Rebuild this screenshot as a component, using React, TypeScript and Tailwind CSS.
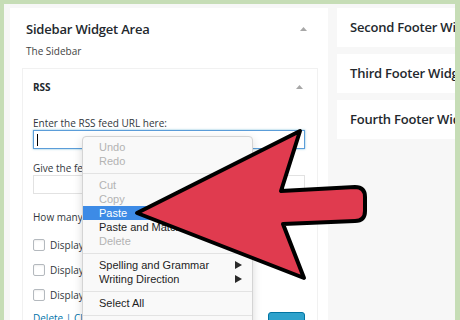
import { ReactNode } from "react";

function UpCaret({ className = "" }: { className?: string }) {
  return (
    <svg width="7" height="4" viewBox="0 0 7 4" className={className}>
      <path d="M0 4 L3.5 0 L7 4 Z" fill="#a7a7a7" />
    </svg>
  );
}

type Item = { label: string; disabled?: boolean; active?: boolean; sub?: boolean };

const groups: Item[][] = [
  [{ label: "Undo", disabled: true }, { label: "Redo", disabled: true }],
  [
    { label: "Cut", disabled: true },
    { label: "Copy", disabled: true },
    { label: "Paste", active: true },
    { label: "Paste and Match Style" },
    { label: "Delete", disabled: true },
  ],
  [{ label: "Spelling and Grammar", sub: true }, { label: "Writing Direction", sub: true }],
  [{ label: "Select All" }],
];

function MenuRow({ item }: { item: Item }) {
  const color = item.active ? "bg-[#3d8be6] text-white" : item.disabled ? "text-[#b3b3b3]" : "text-[#1e1e1e]";
  return (
    <div className={`h-[14px] flex items-center justify-between pl-[16px] pr-[10px] ${color}`}>
      <span>{item.label}</span>
      {item.sub && (
        <svg width="7" height="8" viewBox="0 0 7 8">
          <path d="M0 0 L7 4 L0 8 Z" fill="#2a2a2a" />
        </svg>
      )}
    </div>
  );
}

function ContextMenu() {
  return (
    <div className="absolute left-[82px] top-[136px] w-[171px] h-[200px] bg-[#f9f9f9] border border-[#d4d4d4] rounded-[4px] shadow-[0_3px_10px_rgba(0,0,0,0.15)] pt-[3px] text-[11px] leading-[14px] font-['Liberation_Sans',Arial,sans-serif]">
      {groups.map((g, i) => (
        <div key={i}>
          {g.map(it => <MenuRow key={it.label} item={it} />)}
          <div className="h-[10px] flex items-center">
            <div className="h-px w-full bg-[#e3e3e3]" />
          </div>
        </div>
      ))}
    </div>
  );
}

function Checkbox({ children }: { children: ReactNode }) {
  return (
    <div className="h-[25px] flex items-center gap-[5px]">
      <div className="w-[12px] h-[12px] border border-[#b4b9be] rounded-[2px] bg-white shadow-[inset_0_1px_2px_rgba(0,0,0,0.07)]" />
      <span>{children}</span>
    </div>
  );
}

function FooterPanel({ title }: { title: string }) {
  return (
    <div className="h-[39px] w-[170px] shrink-0 bg-white flex items-center pl-[13px] whitespace-nowrap text-[13px] tracking-[-0.2px] font-semibold text-[#23282d]">
      {title}
    </div>
  );
}

export default function App() {
  return (
    <div className="relative w-[460px] h-[320px] overflow-hidden bg-[#c6ddb6] pt-[4px] pl-[4px] pr-[5px]">
      <div className="h-full bg-[#f7f7f7] flex gap-[9px] pt-[4px] pl-[6px] overflow-hidden font-['Open_Sans',sans-serif] text-[#32373c]">
        {/* sidebar widget area */}
        <div className="w-[318px] shrink-0 h-[330px] bg-white pl-[12px] pr-[10px] pt-[12px]">
          <div className="flex items-center justify-between pl-[4px] pr-[11px] h-[18px]">
            <span className="text-[13px] tracking-[-0.2px] font-semibold text-[#23282d] leading-[18px]">Sidebar Widget Area</span>
            <UpCaret />
          </div>
          <div className="pl-[4px] mt-[6px] text-[10px] leading-[14px] text-[#444]">The Sidebar</div>

          <div className="mt-[10px] border border-[#f1f1f1] bg-white h-[280px]">
            <div className="h-[36px] flex items-center justify-between pl-[10px] pr-[14px]">
              <span className="text-[10px] font-bold text-[#23282d]">RSS</span>
              <UpCaret />
            </div>
            <div className="pl-[10px] pr-[12px] text-[10px] leading-[14px] text-[#32373c]">
              <div className="mt-[11px]">Enter the RSS feed URL here:</div>
              <div className="h-[19px] border border-[#5b9dd9] shadow-[0_0_2px_rgba(30,140,190,0.6)] bg-white flex items-center pl-[3px]">
                <div className="w-px h-[12px] bg-black" />
              </div>
              <div className="mt-[12px]">Give the feed a title (optional):</div>
              <div className="h-[19px] border border-[#e2e2e2] bg-white" />
              <div className="mt-[16px]">How many items would you like to display?</div>
              <div className="mt-[8px]">
                <Checkbox>Display item content?</Checkbox>
                <Checkbox>Display item author if available?</Checkbox>
                <Checkbox>Display item date?</Checkbox>
              </div>
              <div className="mt-[3px] flex items-start justify-between">
                <span className="mt-[1px] text-[#0073aa]">Delete | Close</span>
                <div className="w-[37px] h-[24px] bg-[#2ea2cc] border border-[#0074a2] rounded-[3px] mt-[2px]" />
              </div>
            </div>
          </div>
        </div>

        {/* footer widget areas */}
        <div className="flex-1 min-w-0 flex flex-col gap-[7px] overflow-hidden">
          <FooterPanel title="Second Footer Widget Area" />
          <FooterPanel title="Third Footer Widget Area" />
          <FooterPanel title="Fourth Footer Widget Area" />
        </div>
      </div>

      <ContextMenu />

      <svg className="absolute left-0 top-0" width="460" height="320" viewBox="0 0 460 320">
        <path
          d="M137 213 L300 131 L281 191 L355 187 Q365 187 365 197 L365 211 Q365 221 355 221 L283 224 L304 278 Z"
          fill="#e03b4f"
          stroke="#000"
          strokeWidth="4"
          strokeLinejoin="round"
        />
      </svg>
    </div>
  );
}
